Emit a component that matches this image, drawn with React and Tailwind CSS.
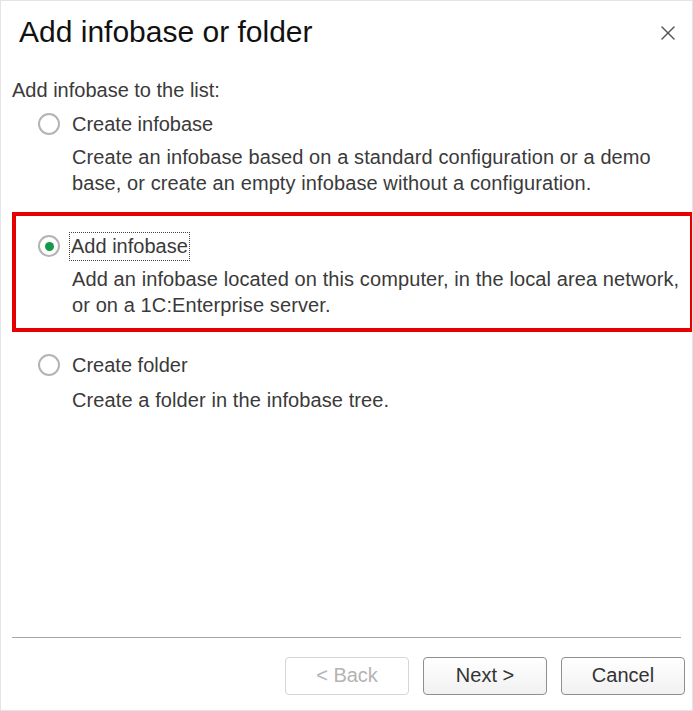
import { X } from 'lucide-react'

// ── Radio ─────────────────────────────────────────────────────
function Radio({ checked }) {
  return (
    <span className="w-[22px] h-[22px] rounded-full border-2 border-[#b4b4b4] bg-white flex items-center justify-center shrink-0">
      {checked && <span className="w-[9px] h-[9px] rounded-full bg-[#139a48]" />}
    </span>
  )
}

// ── Option ────────────────────────────────────────────────────
function Option({ label, lines, checked, descGap = 'mt-[7px]' }) {
  return (
    <div>
      <div className="flex items-center h-[26px]">
        <Radio checked={checked} />
        <span
          className={
            checked
              ? 'ml-[10px] px-[1px] leading-[27px] text-[20px] text-[#3a3a3a] outline-1 outline-dotted outline-[#444] outline-offset-0'
              : 'ml-[12px] text-[20px] text-[#3a3a3a]'
          }
        >
          {label}
        </span>
      </div>
      <div className={`${descGap} ml-[34px] text-[20px] tracking-[0.1px] leading-[26px] text-[#3a3a3a] whitespace-nowrap`}>
        {lines.map(l => <div key={l}>{l}</div>)}
      </div>
    </div>
  )
}

function Button({ children, disabled }) {
  return (
    <button
      className={
        disabled
          ? 'w-[124px] h-[38px] pb-[2px] rounded-[4px] border border-[#d6d6d6] bg-white text-[20px] text-[#b4b4b4]'
          : 'w-[124px] h-[38px] pb-[2px] rounded-[4px] border border-[#8f8f8f] bg-gradient-to-b from-white to-[#f1f1f1] text-[20px] text-[#333]'
      }
    >
      {children}
    </button>
  )
}

export default function App() {
  return (
    <div
      className="w-[693px] h-[711px] bg-white border border-[#e4e4e4] flex flex-col overflow-hidden"
      style={{ fontFamily: '"Liberation Sans", Arial, sans-serif' }}
    >
      {/* header */}
      <div className="flex items-center justify-between pl-[18px] pr-[12px] pt-[15px] h-[47px]">
        <h1 className="text-[30px] leading-[32px] text-[#111]">Add infobase or folder</h1>
        <X size={24} strokeWidth={1.4} className="text-[#555] mt-[2px]" />
      </div>

      <div className="pl-[11px] mt-[29px] text-[20px] leading-[26px] text-[#3a3a3a]">Add infobase to the list:</div>

      <div className="pl-[37px] mt-[8px]">
        <Option
          label="Create infobase"
          lines={[
            'Create an infobase based on a standard configuration or a demo',
            'base, or create an empty infobase without a configuration.',
          ]}
        />
      </div>

      <div className="ml-[11px] mt-[16px] border-4 border-r-2 border-[#e60000] pl-[22px] pt-[17px] pb-[10px]">
        <Option
          checked
          label="Add infobase"
          lines={[
            'Add an infobase located on this computer, in the local area network,',
            'or on a 1C:Enterprise server.',
          ]}
        />
      </div>

      <div className="pl-[37px] mt-[20px]">
        <Option
          label="Create folder"
          descGap="mt-[9px]"
          lines={['Create a folder in the infobase tree.']}
        />
      </div>

      <div className="flex-1" />

      <div className="mx-[11px] h-px bg-[#a6a6a6]" />
      <div className="flex justify-end gap-[14px] pr-[7px] pt-[19px] pb-[15px]">
        <Button disabled>&lt; Back</Button>
        <Button>Next &gt;</Button>
        <Button>Cancel</Button>
      </div>
    </div>
  )
}
